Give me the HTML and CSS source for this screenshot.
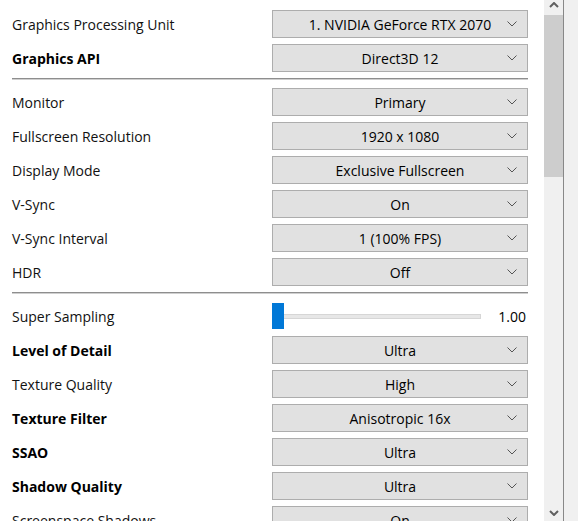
FILE: index.html
```html
<!DOCTYPE html>
<html lang="en">
<head>
    <meta charset="UTF-8">
    <title>Graphics Settings</title>
    <link rel="stylesheet" href="styles.css">
</head>
<body>
    <div class="window">
        <div class="panel">
            <div class="row">
                <span class="label">Graphics Processing Unit</span>
                <div class="combo"><span>1. NVIDIA GeForce RTX 2070</span><svg class="chev" width="10" height="6" viewBox="0 0 10 6"><path d="M0.5 0.5 L5 5 L9.5 0.5"/></svg></div>
            </div>
            <div class="row">
                <span class="label bold">Graphics API</span>
                <div class="combo"><span>Direct3D 12</span><svg class="chev" width="10" height="6" viewBox="0 0 10 6"><path d="M0.5 0.5 L5 5 L9.5 0.5"/></svg></div>
            </div>

            <div class="separator"></div>

            <div class="row">
                <span class="label">Monitor</span>
                <div class="combo"><span>Primary</span><svg class="chev" width="10" height="6" viewBox="0 0 10 6"><path d="M0.5 0.5 L5 5 L9.5 0.5"/></svg></div>
            </div>
            <div class="row">
                <span class="label">Fullscreen Resolution</span>
                <div class="combo"><span>1920 x 1080</span><svg class="chev" width="10" height="6" viewBox="0 0 10 6"><path d="M0.5 0.5 L5 5 L9.5 0.5"/></svg></div>
            </div>
            <div class="row">
                <span class="label">Display Mode</span>
                <div class="combo"><span>Exclusive Fullscreen</span><svg class="chev" width="10" height="6" viewBox="0 0 10 6"><path d="M0.5 0.5 L5 5 L9.5 0.5"/></svg></div>
            </div>
            <div class="row">
                <span class="label">V-Sync</span>
                <div class="combo"><span>On</span><svg class="chev" width="10" height="6" viewBox="0 0 10 6"><path d="M0.5 0.5 L5 5 L9.5 0.5"/></svg></div>
            </div>
            <div class="row">
                <span class="label">V-Sync Interval</span>
                <div class="combo"><span>1 (100% FPS)</span><svg class="chev" width="10" height="6" viewBox="0 0 10 6"><path d="M0.5 0.5 L5 5 L9.5 0.5"/></svg></div>
            </div>
            <div class="row">
                <span class="label">HDR</span>
                <div class="combo"><span>Off</span><svg class="chev" width="10" height="6" viewBox="0 0 10 6"><path d="M0.5 0.5 L5 5 L9.5 0.5"/></svg></div>
            </div>

            <div class="separator"></div>

            <div class="row">
                <span class="label">Super Sampling</span>
                <div class="slider">
                    <div class="thumb"></div>
                    <div class="track"></div>
                    <span class="value">1.00</span>
                </div>
            </div>
            <div class="row">
                <span class="label bold">Level of Detail</span>
                <div class="combo"><span>Ultra</span><svg class="chev" width="10" height="6" viewBox="0 0 10 6"><path d="M0.5 0.5 L5 5 L9.5 0.5"/></svg></div>
            </div>
            <div class="row">
                <span class="label">Texture Quality</span>
                <div class="combo"><span>High</span><svg class="chev" width="10" height="6" viewBox="0 0 10 6"><path d="M0.5 0.5 L5 5 L9.5 0.5"/></svg></div>
            </div>
            <div class="row">
                <span class="label bold">Texture Filter</span>
                <div class="combo"><span>Anisotropic 16x</span><svg class="chev" width="10" height="6" viewBox="0 0 10 6"><path d="M0.5 0.5 L5 5 L9.5 0.5"/></svg></div>
            </div>
            <div class="row">
                <span class="label bold">SSAO</span>
                <div class="combo"><span>Ultra</span><svg class="chev" width="10" height="6" viewBox="0 0 10 6"><path d="M0.5 0.5 L5 5 L9.5 0.5"/></svg></div>
            </div>
            <div class="row">
                <span class="label bold">Shadow Quality</span>
                <div class="combo"><span>Ultra</span><svg class="chev" width="10" height="6" viewBox="0 0 10 6"><path d="M0.5 0.5 L5 5 L9.5 0.5"/></svg></div>
            </div>
            <div class="row">
                <span class="label">Screenspace Shadows</span>
                <div class="combo"><span>On</span><svg class="chev" width="10" height="6" viewBox="0 0 10 6"><path d="M0.5 0.5 L5 5 L9.5 0.5"/></svg></div>
            </div>
        </div>

        <div class="scrollbar">
            <div class="arrow-btn up">
                <svg width="10" height="6" viewBox="0 0 10 6"><path d="M1 5 L5 1 L9 5"/></svg>
            </div>
            <div class="scroll-thumb"></div>
            <div class="scroll-track"></div>
            <div class="arrow-btn down">
                <svg width="10" height="6" viewBox="0 0 10 6"><path d="M1 1 L5 5 L9 1"/></svg>
            </div>
        </div>
        <div class="frame-edge"></div>
    </div>
</body>
</html>
```

FILE: styles.css
```css
body {
    margin: 0;
    font-family: "Open Sans", "Noto Sans", sans-serif;
    font-size: 14px;
    color: #000;
    background-color: #fff;
}

.window {
    display: flex;
    height: 100vh;
    overflow: hidden;
}

.panel {
    flex-grow: 1;
    padding: 10px 16px 0 12px;
    background-color: #fff;
}

.row {
    display: flex;
    align-items: center;
    height: 28px;
    margin-bottom: 6px;
}

.label {
    width: 260px;
    flex-shrink: 0;
    color: #111;
}

.bold {
    font-weight: bold;
    color: #000;
}

.combo {
    position: relative;
    flex-grow: 1;
    height: 26px;
    display: flex;
    align-items: center;
    justify-content: center;
    background-color: #e1e1e1;
    border: 1px solid #adadad;
}

.chev {
    position: absolute;
    right: 10px;
    top: 10px;
    fill: none;
    stroke: #555;
    stroke-width: 1;
}

.separator {
    height: 0;
    border-top: 1px solid #8e8e8e;
    border-bottom: 1px solid #cfcfcf;
    margin: 1px 0 8px;
}

.slider {
    flex-grow: 1;
    display: flex;
    align-items: center;
    height: 28px;
}

.thumb {
    width: 12px;
    height: 26px;
    background-color: #0078d7;
    flex-shrink: 0;
}

.track {
    width: 196px;
    height: 3px;
    background-color: #e7e7e7;
    border: 1px solid #d6d6d6;
    border-left: none;
}

.value {
    flex-grow: 1;
    text-align: right;
    padding-right: 2px;
}

.scrollbar {
    width: 19px;
    flex-shrink: 0;
    display: flex;
    flex-direction: column;
    background-color: #f0f0f0;
}

.arrow-btn {
    display: flex;
    justify-content: center;
    flex-shrink: 0;
}

.arrow-btn svg {
    fill: none;
    stroke: #606060;
    stroke-width: 2;
}

.arrow-btn.up {
    height: 15px;
    padding-top: 2px;
    box-sizing: border-box;
}

.arrow-btn.down {
    height: 16px;
    padding-top: 5px;
    box-sizing: border-box;
}

.scroll-thumb {
    height: 162px;
    background-color: #cdcdcd;
    flex-shrink: 0;
}

.scroll-track {
    flex-grow: 1;
}

.frame-edge {
    width: 14px;
    flex-shrink: 0;
    background-color: #f0f0f0;
    border-left: 1px solid #888;
}
```
